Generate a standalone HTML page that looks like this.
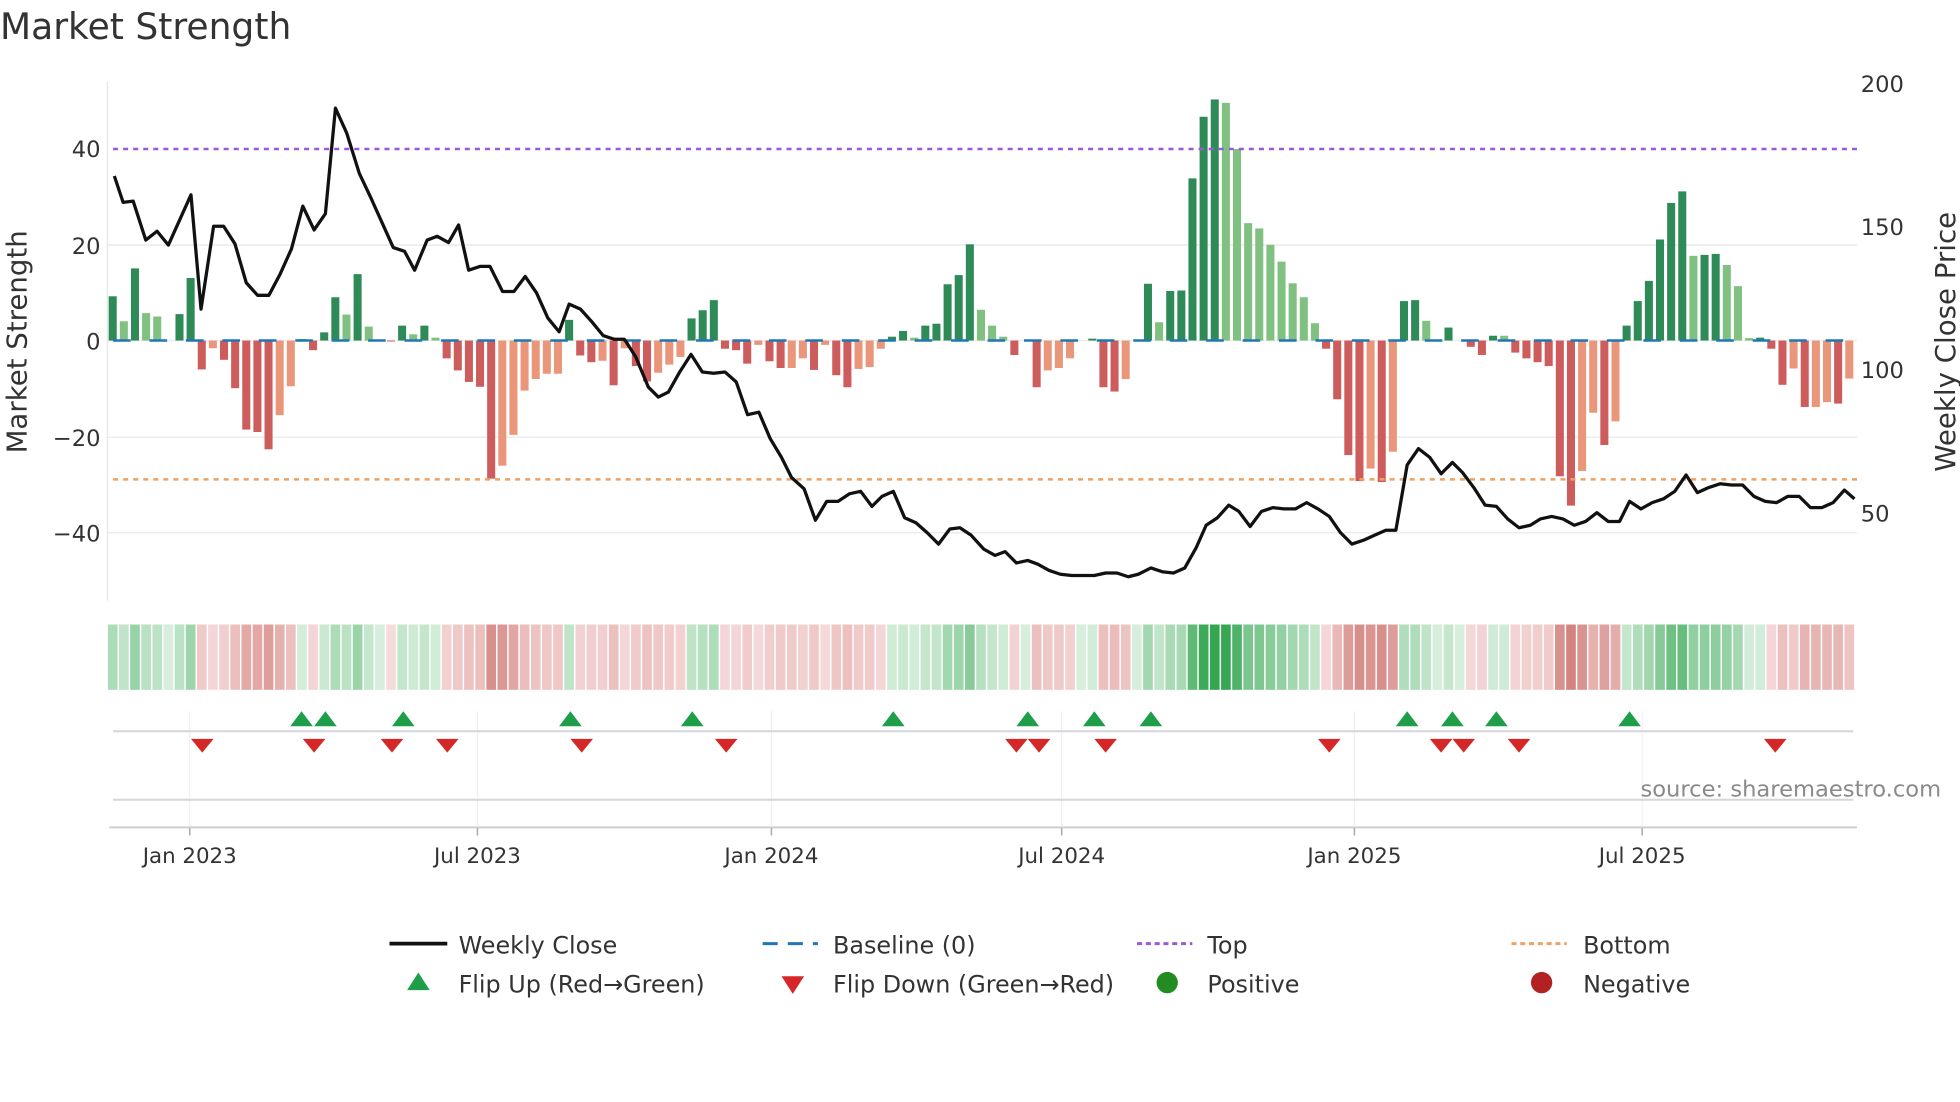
<!DOCTYPE html>
<html><head><meta charset="utf-8">
<style>
html,body{margin:0;padding:0;background:#fff;overflow:hidden}
svg{display:block}
text{font-family:"DejaVu Sans","Liberation Sans",sans-serif;fill:#333}
</style></head>
<body>
<svg id="c" width="1960" height="1102" viewBox="0 0 1560 877" xmlns="http://www.w3.org/2000/svg">
<rect width="1560" height="877" fill="#fff"/>
<text x="0" y="31" font-size="28.7" fill="#333">Market Strength</text>
<g stroke="#ececec" stroke-width="1.2">
<line x1="86" y1="195" x2="1478" y2="195"/>
<line x1="86" y1="348" x2="1478" y2="348"/>
<line x1="86" y1="424" x2="1478" y2="424"/>
<line x1="86" y1="271" x2="1478" y2="271"/>
</g>
<line x1="85.5" y1="65" x2="85.5" y2="478" stroke="#e8e8e8" stroke-width="1.2"/>
<g id="bars"></g>
<line x1="90" y1="271" x2="1478" y2="271" stroke="#1f77b4" stroke-width="2" stroke-dasharray="14,15"/>
<line x1="90" y1="118.5" x2="1478" y2="118.5" stroke="#9b59d9" stroke-width="2" stroke-dasharray="4,4"/>
<line x1="90" y1="381.5" x2="1478" y2="381.5" stroke="#f0a060" stroke-width="2" stroke-dasharray="4,4"/>
<polyline id="price" fill="none" stroke="#111" stroke-width="2.6" stroke-linejoin="round"/>
<g font-size="18" text-anchor="end">
<text x="80" y="125">40</text>
<text x="80" y="202">20</text>
<text x="80" y="278">0</text>
<text x="80" y="355">−20</text>
<text x="80" y="431">−40</text>
</g>
<text transform="translate(21,272) rotate(-90)" font-size="22" text-anchor="middle">Market Strength</text>
<g font-size="18">
<text x="1481" y="73">200</text>
<text x="1481" y="187">150</text>
<text x="1481" y="301">100</text>
<text x="1481" y="415">50</text>
</g>
<text transform="translate(1556,272) rotate(-90)" font-size="22" text-anchor="middle">Weekly Close Price</text>
<g id="heat"></g>
<g stroke="#eef0f4" stroke-width="1">
<line x1="151" y1="566" x2="151" y2="660"/><line x1="380" y1="566" x2="380" y2="660"/>
<line x1="614" y1="566" x2="614" y2="660"/><line x1="845" y1="566" x2="845" y2="660"/>
<line x1="1078" y1="566" x2="1078" y2="660"/><line x1="1307" y1="566" x2="1307" y2="660"/>
</g>
<line x1="90" y1="582" x2="1475" y2="582" stroke="#d4d6da" stroke-width="1.6"/>
<line x1="90" y1="636.5" x2="1475" y2="636.5" stroke="#d4d6da" stroke-width="1.6"/>
<g id="flips"></g>
<text x="1545" y="634" font-size="18" text-anchor="end" style="fill:#8a8a8a">source: sharemaestro.com</text>
<line x1="87" y1="658.5" x2="1478" y2="658.5" stroke="#cfcfcf" stroke-width="1.6"/>
<g stroke="#aaa" stroke-width="1.2">
<line x1="151" y1="659" x2="151" y2="665"/><line x1="380" y1="659" x2="380" y2="665"/>
<line x1="614" y1="659" x2="614" y2="665"/><line x1="845" y1="659" x2="845" y2="665"/>
<line x1="1078" y1="659" x2="1078" y2="665"/><line x1="1307" y1="659" x2="1307" y2="665"/>
</g>
<g font-size="17" text-anchor="middle">
<text x="151" y="687">Jan 2023</text><text x="380" y="687">Jul 2023</text>
<text x="614" y="687">Jan 2024</text><text x="845" y="687">Jul 2024</text>
<text x="1078" y="687">Jan 2025</text><text x="1307" y="687">Jul 2025</text>
</g>
<g font-size="19">
<line x1="310" y1="751" x2="356" y2="751" stroke="#111" stroke-width="3"/>
<text x="365" y="759">Weekly Close</text>
<line x1="607" y1="751" x2="651" y2="751" stroke="#1f77b4" stroke-width="2.4" stroke-dasharray="12,8"/>
<text x="663" y="759">Baseline (0)</text>
<line x1="905" y1="751" x2="949" y2="751" stroke="#9b59d9" stroke-width="2.4" stroke-dasharray="4,3"/>
<text x="961" y="759">Top</text>
<line x1="1203" y1="751" x2="1247" y2="751" stroke="#f0a060" stroke-width="2.4" stroke-dasharray="4,3"/>
<text x="1260" y="759">Bottom</text>
<polygon points="324,788 342,788 333,774" fill="#1e9e48"/>
<text x="365" y="790">Flip Up (Red→Green)</text>
<polygon points="622,777 640,777 631,791" fill="#d62728"/>
<text x="663" y="790">Flip Down (Green→Red)</text>
<circle cx="929" cy="782" r="8.5" fill="#228b22"/>
<text x="961" y="790">Positive</text>
<circle cx="1227" cy="782" r="8.5" fill="#b22222"/>
<text x="1260" y="790">Negative</text>
</g>
</svg>
<script>
var V=[9.2,4,15,5.7,5,0,5.5,13,-6,-1.6,-4,-9.9,-18.5,-19,-22.6,-15.5,-9.5,0.3,-2,1.7,9,5.4,13.8,2.9,0,-0.2,3.1,1.3,3.1,0.6,-3.7,-6.2,-8.6,-9.6,-28.7,-26,-19.6,-10.4,-8,-6.9,-6.9,4.3,-3.1,-4.5,-4.2,-9.3,-1.6,-5.3,-8.5,-6.7,-5,-3.4,4.6,6.3,8.4,
-1.7,-2,-4.8,-0.9,-4.3,-5.7,-5.7,-3.7,-6.1,-0.9,-7.2,-9.7,-5.9,-5.5,-1.7,0.8,2,0.6,3.1,3.5,11.7,13.6,20,6.4,3.1,0.8,-3,0,-9.7,-6.2,-5.7,-3.7,0,0.4,-9.7,-10.6,-8,0,11.8,3.8,10.3,10.4,33.7,46.5,50.1,49.4,39.8,24.4,23.3,19.9,16.4,11.9,9,3.6,
-1.7,-12.2,-23.8,-29.2,-26.6,-29.4,-23.1,8.2,8.4,4.1,0,2.7,0,-1.3,-3,1,1,-2.5,-3.7,-4.5,-5.3,-28.2,-34.3,-27.1,-15,-21.7,-16.8,3.1,8.2,12.4,21,28.6,31,17.6,17.8,18,15.7,11.3,0.5,0.6,-1.7,-9.2,-5.8,-13.8,-13.8,-12.8,-13.1,-7.9];
var NS="http://www.w3.org/2000/svg";
function el(t,a,p){var e=document.createElementNS(NS,t);for(var k in a)e.setAttribute(k,a[k]);p.appendChild(e);return e;}
function mix(a,b,t){var r=[];for(var i=0;i<3;i++)r.push(Math.round(a[i]+(b[i]-a[i])*t));return "rgb("+r.join(",")+")";}
var bars=document.getElementById("bars"),heat=document.getElementById("heat");
var step=8.86,x0=89.7;
for(var i=0;i<V.length;i++){
 var v=V[i],x=x0+step*i,prev=i?V[i-1]:0;
 var strong=Math.abs(v)>Math.abs(prev)||(prev*v<0);
 if(Math.abs(v)>=0.15){
  var h=Math.abs(v)*3.83,col;
  if(v>0)col=strong?"#2e8b57":"#80c080";else col=strong?"#cd5c5c":"#e9967a";
  el("rect",{x:x-3.2,y:v>0?271-h:271,width:6.4,height:h,fill:col},bars);
 }
 var c;
 if(v>=0){var t=Math.pow(Math.min(v/50,1),0.8);c=mix([214,238,219],[52,166,82],t);}
 else{var t=Math.pow(Math.min(-v/34,1),0.9);c=mix([246,220,220],[211,132,128],t);}
 el("rect",{x:x-4.43+0.6,y:497,width:7.7,height:52,fill:c},heat);
}
var P=[[91,140],[98,161],[106,160],[116,191],[125,184],[134,195],[143,175],[152,155],[160,246],[170,180],[178,180],[187,194],[196,225],[205,235],[214,235],[223,218],[232,198],[241,164],[250,183],[259,170],[267,86],[276,106],[286,138],[295,157],[304,177],[313,197],[322,200],[330,215],[340,191],[348,188],[357,193],[365,179],[373,215],[382,212],[390,212],[400,232],[409,232],[418,220],[427,233],[436,253],[445,264],[453,242],[462,246],[471,256],[480,267],[489,270],[497,270],[506,284],[516,308],[524,316],[532,312],[541,296],[550,282],[559,296],[568,297],[577,296],[586,304],[595,330],[604,328],[613,349],[622,364],[630,380],[640,389],[649,414],[658,399],[667,399],[676,393],[685,391],[694,403],[702,395],[711,391],[720,412],[729,416],[738,424],[747,433],[756,421],[764,420],[773,426],[783,437],[792,442],[800,439],[809,448],[818,446],[826,449],[835,454],[844,457],[853,458],[862,458],[871,458],[880,456],[889,456],[898,459],[906,457],[916,452],[925,455],[934,456],[943,452],[952,436],[960,418],[969,412],[978,402],[986,407],[995,419],[1004,407],[1013,404],[1022,405],[1031,405],[1040,400],[1049,405],[1058,411],[1067,424],[1076,433],[1085,430],[1094,426],[1103,422],[1111,422],[1120,370],[1129,357],[1138,364],[1147,377],[1156,368],[1164,376],[1173,388],[1182,402],[1191,403],[1200,413],[1209,420],[1218,418],[1226,413],[1235,411],[1244,413],[1253,418],[1262,415],[1271,408],[1280,415],[1289,415],[1297,399],[1306,405],[1315,400],[1324,397],[1333,391],[1342,378],[1351,392],[1360,388],[1369,385],[1378,386],[1387,386],[1396,395],[1405,399],[1414,400],[1423,395],[1432,395],[1441,404],[1450,404],[1459,400],[1468,390],[1476,397]];
document.getElementById("price").setAttribute("points",P.map(function(p){return p.join(",")}).join(" "));
var fl=document.getElementById("flips");
[240,259,321,454,551,711,818,871,916,1120,1156,1191,1297].forEach(function(x){el("polygon",{points:(x-9)+",578 "+(x+9)+",578 "+x+",566",fill:"#1e9e48"},fl);});
[161,250,312,356,463,578,809,827,880,1058,1147,1165,1209,1413].forEach(function(x){el("polygon",{points:(x-9)+",588 "+(x+9)+",588 "+x+",599",fill:"#d62728"},fl);});
</script>
</body></html>
